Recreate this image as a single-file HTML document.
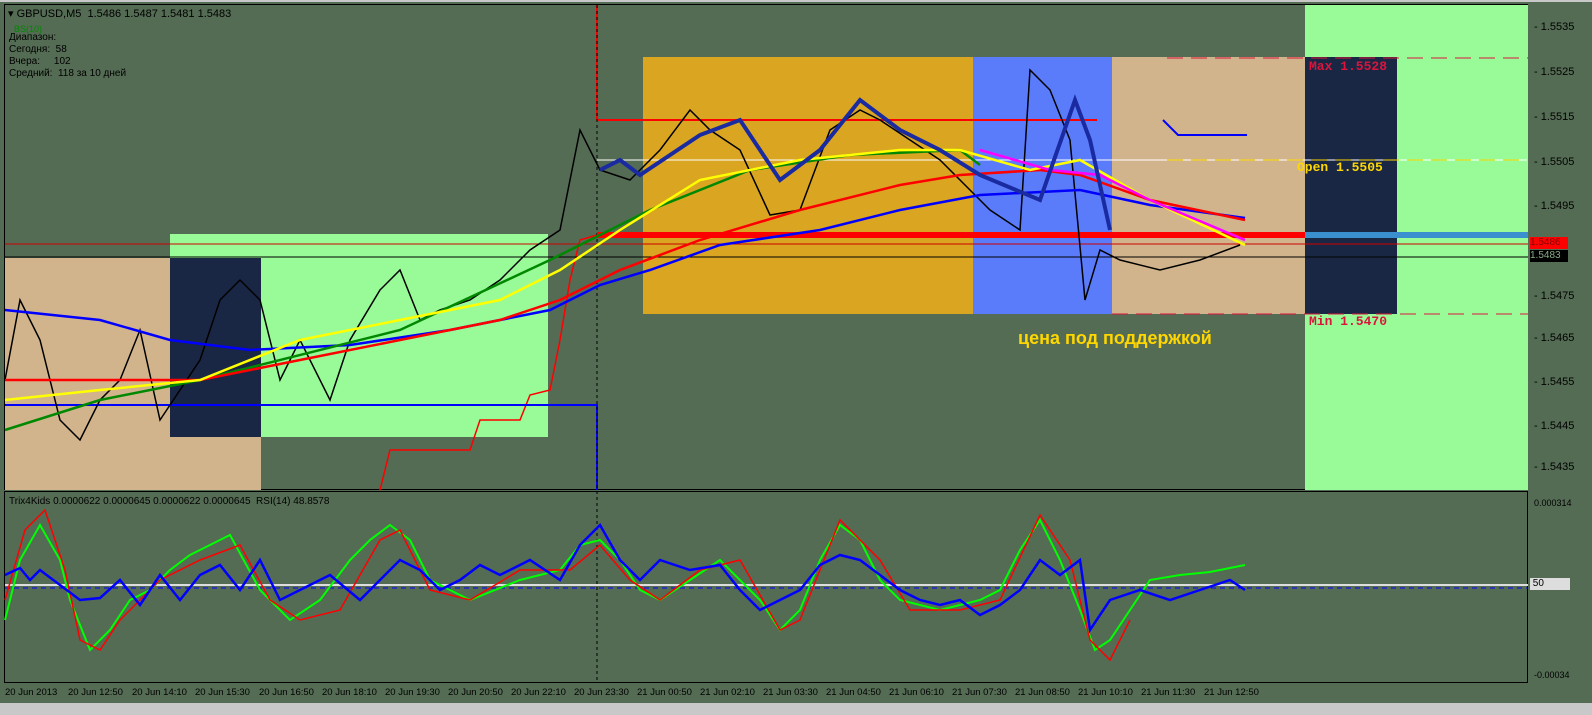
<!DOCTYPE html>
<html><head><meta charset="utf-8"><style>
body{margin:0;width:1592px;height:715px;background:#546b54;overflow:hidden;font-family:"Liberation Sans",sans-serif;position:relative}
.a{position:absolute}
.t{position:absolute;font-size:11px;color:#000;white-space:nowrap}
.r{position:absolute;left:1534px;font-size:11px;color:#000}
.m{font-family:"Liberation Mono",monospace;font-weight:bold;font-size:13px;position:absolute}
</style></head><body>
<div class="a" style="left:0;top:0;width:1592px;height:2px;background:#c8c8c8"></div>
<div class="a" style="left:4px;top:4px;width:1524px;height:486px;border:1px solid #000;box-sizing:border-box"></div>
<div class="a" style="left:4px;top:491px;width:1524px;height:192px;border:1px solid #000;box-sizing:border-box"></div>
<svg class="a" style="left:0;top:0" width="1592" height="715">
<rect x="5" y="258" width="256" height="232" fill="#d2b48c"/>
<rect x="170" y="234" width="378" height="203" fill="#98fb98"/>
<rect x="170" y="258" width="91" height="179" fill="#1a2744"/>
<rect x="643" y="57" width="330" height="257" fill="#daa520"/>
<rect x="973" y="57" width="139" height="257" fill="#5b7cfa"/>
<rect x="1112" y="57" width="193" height="257" fill="#d2b48c"/>
<rect x="1305" y="5" width="223" height="485" fill="#98fb98"/>
<rect x="1305" y="57" width="92" height="257" fill="#1a2744"/>
<line x1="1167" y1="58" x2="1528" y2="58" stroke="#dc143c" stroke-dasharray="16,8"/>
<line x1="1112" y1="314" x2="1528" y2="314" stroke="#dc143c" stroke-dasharray="16,8"/>
<line x1="597" y1="160" x2="1528" y2="160" stroke="#fff"/>
<line x1="1167" y1="160" x2="1528" y2="160" stroke="#ffd700" stroke-dasharray="16,8"/>
<line x1="597" y1="120" x2="1097" y2="120" stroke="#f00" stroke-width="2"/>
<polyline points="597,5 597,120" stroke="#f00" fill="none" stroke-width="2"/>
<polyline points="380,490 390,450 470,450 480,420 520,420 530,395 550,390 560,340 570,280 580,240 597,235" stroke="#f00" fill="none" stroke-width="1.5"/>
<polyline points="5,405 597,405 597,490" stroke="#00f" fill="none" stroke-width="2"/>
<line x1="597" y1="5" x2="597" y2="683" stroke="#000" stroke-dasharray="3,3"/>
<rect x="597" y="232" width="708" height="6" fill="#f00"/>
<rect x="1305" y="232" width="223" height="6" fill="#3a8fcf"/>
<line x1="5" y1="244" x2="1528" y2="244" stroke="#c00"/>
<line x1="5" y1="257" x2="1528" y2="257" stroke="#000"/>
<polyline points="1163,120 1178,135 1247,135" stroke="#00f" fill="none" stroke-width="2"/>
<polyline points="5,380 20,300 40,340 60,420 80,440 100,400 120,380 140,330 160,420 180,390 200,360 220,300 240,280 260,300 280,380 300,340 330,400 350,340 380,290 400,270 420,320 440,310 470,300 500,280 530,250 560,230 580,130 600,170 630,180 660,150 690,110 710,130 740,150 770,215 800,210 830,130 860,110 880,120 910,140 940,160 970,190 990,210 1020,230 1030,70 1050,90 1070,140 1085,300 1100,250 1120,260 1160,270 1200,260 1240,245" stroke="#000" fill="none" stroke-width="1.5"/>
<polyline points="5,310 100,320 170,340 250,350 350,345 450,330 550,310 600,285 650,270 720,245 820,230 900,210 980,195 1080,190 1150,205 1245,218" stroke="#00f" fill="none" stroke-width="2.5"/>
<polyline points="5,430 100,400 200,380 400,330 550,260 650,210 750,170 850,155 960,150 980,165" stroke="#080" fill="none" stroke-width="2.5"/>
<polyline points="5,380 100,380 200,380 300,360 400,340 500,320 560,300 620,270 700,240 800,210 900,185 960,175 1040,170 1080,175 1150,200 1245,220" stroke="#f00" fill="none" stroke-width="2.5"/>
<polyline points="5,400 100,390 200,380 300,340 400,320 500,300 560,270 620,230 700,180 800,160 900,150 960,150 1030,170 1080,160 1150,200 1245,245" stroke="#ff0" fill="none" stroke-width="2.5"/>
<polyline points="980,150 1050,170 1100,175 1150,200 1245,240" stroke="#f0f" fill="none" stroke-width="2.5"/>
<polyline points="600,170 620,160 640,175 700,135 740,120 780,180 820,150 860,100 900,130 940,150 980,175 1040,200 1075,100 1090,140 1110,230" stroke="#1a2aa0" fill="none" stroke-width="4"/>
<line x1="5" y1="585" x2="1528" y2="585" stroke="#ddd" stroke-width="2"/>
<line x1="5" y1="588" x2="1528" y2="588" stroke="#00f" stroke-dasharray="5,4"/>
<polyline points="5,620 20,560 40,525 60,560 70,600 90,650 110,630 130,600 150,590 170,570 190,555 210,545 230,535 260,590 290,620 320,600 350,560 370,540 390,525 410,540 430,580 470,600 520,580 560,570 580,545 600,540 620,560 640,590 660,600 690,580 720,560 760,600 780,630 800,610 820,560 840,525 860,540 880,580 900,600 940,610 980,600 1000,590 1020,550 1040,520 1060,560 1080,610 1095,650 1110,640 1130,610 1150,580 1180,575 1210,572 1245,565" stroke="#0f0" fill="none" stroke-width="2"/>
<polyline points="5,600 25,530 45,510 65,570 80,640 100,650 120,620 160,580 200,560 240,545 270,600 300,620 340,610 380,540 400,530 430,590 470,600 520,570 570,570 600,545 630,580 660,600 700,570 740,560 780,630 800,620 840,520 880,560 910,610 960,610 1000,600 1040,515 1070,560 1090,640 1110,660 1130,620" stroke="#f00" fill="none" stroke-width="1.5"/>
<polyline points="5,575 20,568 30,580 40,570 60,585 80,600 100,598 120,580 140,605 160,575 180,600 200,575 220,565 240,590 260,560 280,600 300,590 330,575 360,600 380,580 400,560 420,570 440,590 460,580 480,565 500,575 530,560 560,580 580,545 600,525 620,560 640,580 660,560 690,570 720,565 740,590 760,610 780,600 800,590 820,565 840,555 860,560 880,575 900,590 920,600 940,605 960,600 980,615 1000,605 1020,590 1040,560 1060,575 1080,560 1090,630 1110,600 1140,590 1170,600 1200,590 1230,580 1245,590" stroke="#00f" fill="none" stroke-width="2.5"/>
</svg>
<div class="t" style="left:8px;top:7px">▾ GBPUSD,M5 &nbsp;1.5486 1.5487 1.5481 1.5483</div>
<div class="t" style="left:14px;top:24px;color:#080;font-size:9px">BS(10)</div>
<div class="t" style="left:9px;top:32px;font-size:10px">Диапазон:</div>
<div class="t" style="left:9px;top:44px;font-size:10px">Сегодня: &nbsp;58</div>
<div class="t" style="left:9px;top:56px;font-size:10px">Вчера: &nbsp;&nbsp;&nbsp;&nbsp;102</div>
<div class="t" style="left:9px;top:68px;font-size:10px">Средний: &nbsp;118 за 10 дней</div>
<div class="t" style="left:9px;top:496px;font-size:10px">Trix4Kids 0.0000622 0.0000645 0.0000622 0.0000645 &nbsp;RSI(14) 48.8578</div>
<div class="m" style="left:1309px;top:59px;color:#dc143c">Max 1.5528</div>
<div class="m" style="left:1297px;top:160px;color:#ffd700">Open 1.5505</div>
<div class="m" style="left:1309px;top:314px;color:#dc143c">Min 1.5470</div>
<div class="a" style="left:1018px;top:328px;font-size:18px;font-weight:bold;color:#ffd700;white-space:nowrap">цена под поддержкой</div>
<div class="r" style="top:21px">- 1.5535</div>
<div class="r" style="top:66px">- 1.5525</div>
<div class="r" style="top:111px">- 1.5515</div>
<div class="r" style="top:156px">- 1.5505</div>
<div class="r" style="top:200px">- 1.5495</div>
<div class="r" style="top:290px">- 1.5475</div>
<div class="r" style="top:332px">- 1.5465</div>
<div class="r" style="top:376px">- 1.5455</div>
<div class="r" style="top:420px">- 1.5445</div>
<div class="r" style="top:461px">- 1.5435</div>
<div class="a" style="left:1530px;top:237px;width:38px;height:12px;background:#f00;color:#800;font-size:10px;line-height:12px">1.5486</div>
<div class="a" style="left:1530px;top:250px;width:38px;height:12px;background:#000;color:#8a8;font-size:10px;line-height:12px">1.5483</div>
<div class="r" style="top:498px;font-size:9px">0.000314</div>
<div class="a" style="left:1530px;top:578px;width:40px;height:12px;background:#ddd;font-size:10px;line-height:12px">&nbsp;50</div>
<div class="r" style="top:670px;font-size:9px">-0.00034</div>
<div class="t" style="left:5px;top:687px;font-size:9.5px;word-spacing:0">20 Jun 2013</div>
<div class="t" style="left:68px;top:687px;font-size:9.5px">20 Jun 12:50</div>
<div class="t" style="left:132px;top:687px;font-size:9.5px">20 Jun 14:10</div>
<div class="t" style="left:195px;top:687px;font-size:9.5px">20 Jun 15:30</div>
<div class="t" style="left:259px;top:687px;font-size:9.5px">20 Jun 16:50</div>
<div class="t" style="left:322px;top:687px;font-size:9.5px">20 Jun 18:10</div>
<div class="t" style="left:385px;top:687px;font-size:9.5px">20 Jun 19:30</div>
<div class="t" style="left:448px;top:687px;font-size:9.5px">20 Jun 20:50</div>
<div class="t" style="left:511px;top:687px;font-size:9.5px">20 Jun 22:10</div>
<div class="t" style="left:574px;top:687px;font-size:9.5px">20 Jun 23:30</div>
<div class="t" style="left:637px;top:687px;font-size:9.5px">21 Jun 00:50</div>
<div class="t" style="left:700px;top:687px;font-size:9.5px">21 Jun 02:10</div>
<div class="t" style="left:763px;top:687px;font-size:9.5px">21 Jun 03:30</div>
<div class="t" style="left:826px;top:687px;font-size:9.5px">21 Jun 04:50</div>
<div class="t" style="left:889px;top:687px;font-size:9.5px">21 Jun 06:10</div>
<div class="t" style="left:952px;top:687px;font-size:9.5px">21 Jun 07:30</div>
<div class="t" style="left:1015px;top:687px;font-size:9.5px">21 Jun 08:50</div>
<div class="t" style="left:1078px;top:687px;font-size:9.5px">21 Jun 10:10</div>
<div class="t" style="left:1141px;top:687px;font-size:9.5px">21 Jun 11:30</div>
<div class="t" style="left:1204px;top:687px;font-size:9.5px">21 Jun 12:50</div>
<div class="a" style="left:0;top:703px;width:1592px;height:12px;background:#c8c8c8"></div>
</body></html>
